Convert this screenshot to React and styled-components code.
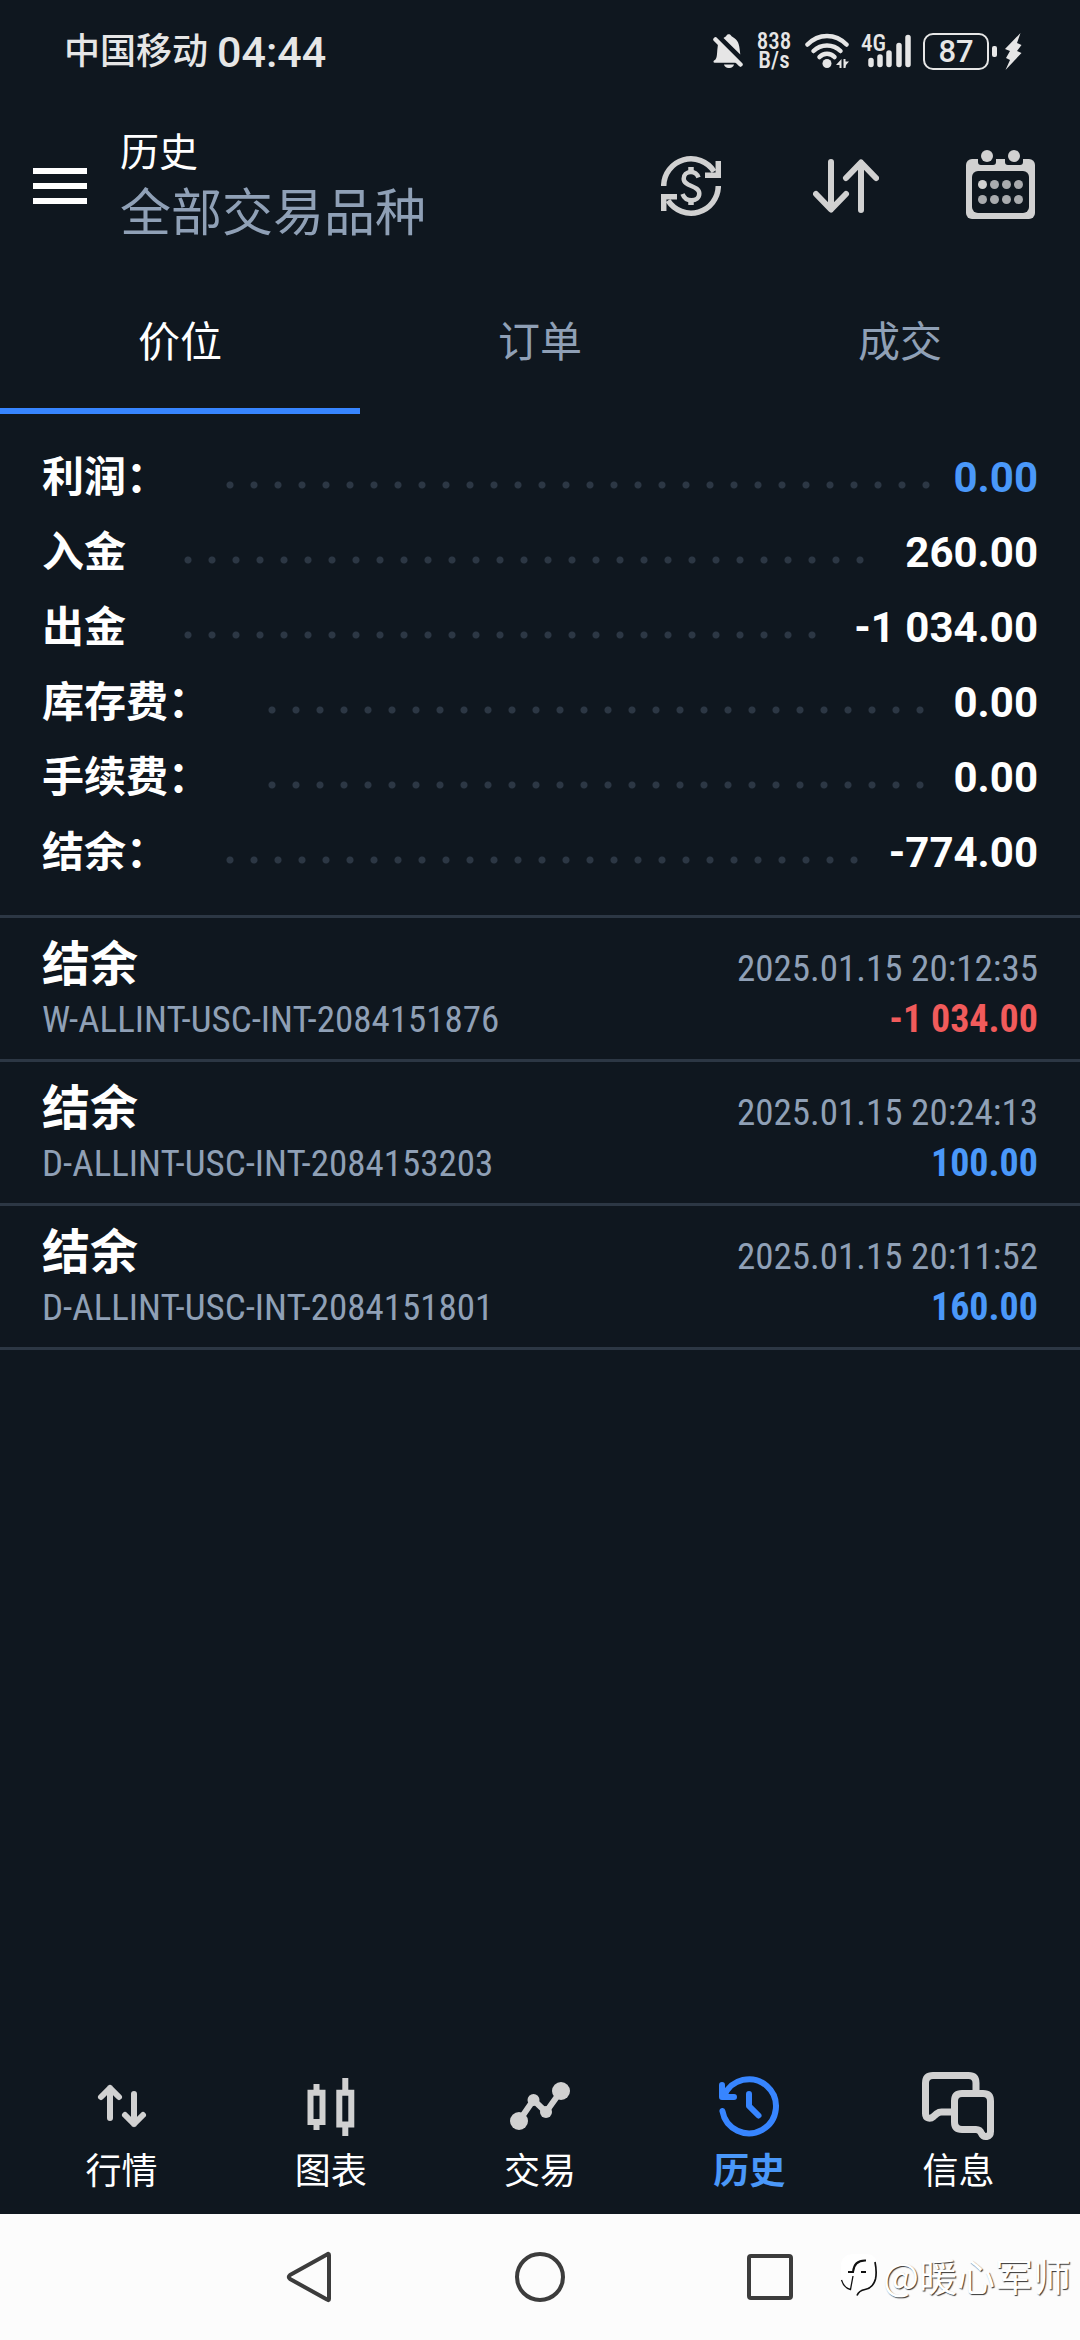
import React from "react";
import styled, { createGlobalStyle } from "styled-components";

const GlobalStyle = createGlobalStyle`
  * {
    box-sizing: border-box;
  }
  body {
    margin: 0;
    background-color: #0f171f;
    color: #ffffff;
    font-family: Roboto, "Noto Sans CJK SC", sans-serif;
  }
  button {
    margin: 0;
    padding: 0;
    border: none;
    background: none;
    color: inherit;
    font-family: inherit;
    cursor: pointer;
  }
  svg {
    display: block;
    flex: none;
  }
`;

const Page = styled.div`
  min-height: 100vh;
  display: flex;
  flex-direction: column;
`;

/* status bar */

const StatusBar = styled.div`
  height: 102px;
  padding: 0 58px 0 64px;
  display: flex;
  justify-content: space-between;
  align-items: center;
  color: #e6e6e6;
`;

const StatusGroup = styled.div`
  display: flex;
  align-items: center;
  gap: ${(props) => props.$gap}px;
`;

const Carrier = styled.span`
  padding-top: 2px;
  font-size: 36px;
  font-weight: 500;
  line-height: 48px;
`;

const Clock = styled.span`
  padding-top: 2px;
  font-size: 43px;
  font-weight: 500;
  line-height: 48px;
`;

const NetSpeed = styled.span`
  width: 38px;
  font-family: "Roboto Condensed", Roboto, sans-serif;
  font-size: 23px;
  font-weight: 500;
  line-height: 19px;
  text-align: center;
  white-space: pre-line;
`;

const Battery = styled.span`
  display: flex;
  align-items: center;
  gap: 3px;

  &::after {
    content: "";
    width: 5px;
    height: 11px;
    border-radius: 2px;
    background-color: #e6e6e6;
  }
`;

const BatteryLevel = styled.span`
  width: 66px;
  height: 37px;
  border: 2px solid #e6e6e6;
  border-radius: 10px;
  font-size: 31px;
  font-weight: 500;
  line-height: 34px;
  text-align: center;
`;

/* header */

const Header = styled.header`
  height: 168px;
  padding: 0 45px 0 33px;
  display: flex;
  align-items: center;
`;

const MenuButton = styled.button`
  width: 54px;
  display: flex;
  flex-direction: column;
  gap: 9px;
`;

const MenuLine = styled.span`
  height: 6px;
  background-color: #ffffff;
`;

const Titles = styled.div`
  flex: 1;
  margin-left: 33px;
  padding-top: 2px;
`;

const Title = styled.h1`
  margin: 0;
  font-size: 39px;
  font-weight: 400;
  line-height: 54px;
`;

const Subtitle = styled.p`
  margin: 0;
  color: #8fa0b6;
  font-size: 51px;
  line-height: 68px;
`;

const Actions = styled.div`
  display: flex;
  align-items: center;
  gap: 86px;
`;

const ActionButton = styled.button`
  width: 69px;
  display: flex;
  justify-content: center;
`;

/* tabs */

const Tabs = styled.nav`
  display: flex;
`;

const Tab = styled.button`
  flex: 1;
  height: 144px;
  padding-top: 8px;
  border-bottom: 6px solid ${(props) => (props.$active ? "#3785ff" : "transparent")};
  color: ${(props) => (props.$active ? "#ffffff" : "#8fa0b6")};
  font-size: 42px;
  line-height: 60px;
`;

/* totals */

const Summary = styled.dl`
  margin: 0;
  padding: 26px 42px 25px;
`;

const SummaryRow = styled.div`
  height: 75px;
  display: flex;
  align-items: center;
  font-size: 42px;
  font-weight: 700;
`;

const SummaryLabel = styled.dt`
  line-height: 60px;
`;

const Leader = styled.div`
  flex: 1;
  margin: 14px 14px 0 50px;

  &::before {
    content: "";
    display: block;
    width: round(down, 100%, 24px);
    height: 8px;
    background: radial-gradient(circle, #2c3744 3px, transparent 4px) 0 0 / 24px 8px repeat-x;
  }
`;

const SummaryValue = styled.dd`
  margin: 0;
  color: ${(props) => (props.$blue ? "#4a98f9" : "#ffffff")};
  line-height: 60px;
`;

/* operations */

const Deals = styled.ul`
  flex: 1;
  margin: 0;
  padding: 0;
  border-top: 3px solid #2c3744;
  list-style: none;
`;

const Deal = styled.li`
  height: 144px;
  padding: 13px 42px 0;
  border-bottom: 3px solid #2c3744;
  font-family: "Roboto Condensed", Roboto, "Noto Sans CJK SC", sans-serif;
`;

const DealLine = styled.div`
  height: ${(props) => props.$height}px;
  display: flex;
  justify-content: space-between;
  align-items: baseline;
`;

const DealTitle = styled.span`
  font-family: "Noto Sans CJK SC", sans-serif;
  font-size: 48px;
  font-weight: 700;
  line-height: 58px;
`;

const DealMeta = styled.span`
  color: #8fa0b6;
  font-size: 37px;
  line-height: 50px;
`;

const DealAmount = styled.span`
  color: ${(props) => (props.$negative ? "#f15b5b" : "#4a98f9")};
  font-size: 38px;
  font-weight: 700;
  line-height: 50px;
`;

/* bottom bars */

const BottomNav = styled.nav`
  height: 144px;
  padding: 0 17px;
  display: flex;
`;

const NavItem = styled.a`
  flex: 1;
  display: flex;
  flex-direction: column;
  align-items: center;
  gap: 4px;
  color: ${(props) => (props.$active ? "#4a98f9" : "#ffffff")};
  font-size: 36px;
  font-weight: ${(props) => (props.$active ? 700 : 400)};
  line-height: 52px;
  text-decoration: none;
`;

const SystemBar = styled.footer`
  position: relative;
  height: 126px;
  display: flex;
  justify-content: center;
  align-items: center;
  background-color: #fcfcfc;
`;

const SystemButton = styled.button`
  width: 230px;
  display: flex;
  justify-content: center;
`;

const Watermark = styled.div`
  position: absolute;
  right: 9px;
  top: 36px;
  display: flex;
  align-items: center;
  gap: 5px;
  color: #ffffff;
  font-family: "Noto Sans CJK SC", sans-serif;
  font-size: 38px;
  line-height: 50px;
  text-shadow: 1px 1px 1px #333333;
`;

const BellOffIcon = () => (
  <svg width="30" height="34" viewBox="0 0 30 34" fill="#e6e6e6">
    <path d="M10.500 4 C12 3 13 2.500 13.500 1.500 C14.500 -0.200 17 -0.200 18 1.500 C18.500 2.700 20 3 21.500 4.200 C26 7.500 26.500 12 27.300 20.500 Z" />
    <path d="M5 10 L25 28.800 H2.500 C0 28.800 -0.200 27 2 26 C4 24.500 4 20 4.300 16 Z" />
    <path d="M2.500 5.500 L27.500 30.500" stroke="#e6e6e6" strokeWidth="4.500" strokeLinecap="round" />
    <path d="M11 30.500 H21 C20 35.200 12 35.200 11 30.500 Z" />
  </svg>
);

const WifiIcon = () => (
  <svg width="44" height="36" viewBox="0 0 44 36" fill="none" stroke="#e6e6e6" strokeWidth="4.500" strokeLinecap="round">
    <path d="M2.500 11.500 C13.500 0 30.500 0 41.500 11.500" />
    <path d="M8.500 18 C16 10.500 28 10.500 35.500 18" />
    <path d="M14.500 24 C18.500 19.700 25.500 19.700 29.500 24" />
    <circle cx="22" cy="30.500" r="4.500" fill="#e6e6e6" stroke="none" />
    <path d="M36.500 26 V35 H34.500 V32 H31 Z M38.500 26 V35 H40.500 L41 32 L44 28.500 H40.500 V26 Z" fill="#e6e6e6" stroke="none" />
  </svg>
);

const NetworkLabel = styled.text`
  fill: #e6e6e6;
  stroke: none;
  font-family: "Roboto Condensed", Roboto, sans-serif;
  font-size: 23px;
  font-weight: 500;
`;

const SignalIcon = () => (
  <svg width="50" height="36" viewBox="0 0 50 36" stroke="#e6e6e6" strokeWidth="5.500" strokeLinecap="round">
    <NetworkLabel x="0" y="18">4G</NetworkLabel>
    <path d="M10 27.500 V31.500 M19 24 V31.500 M28 20 V31.500 M38 12.500 V31.500 M47 4.500 V31.500" />
  </svg>
);

const BoltIcon = () => (
  <svg width="17" height="37" viewBox="0 0 17 37" fill="#e6e6e6">
    <path d="M15.500 0 L0 16 L5 18 L1 25 L5 27 L0.500 37 L16.500 20 L12 18 L16.500 12 L12 10 Z" />
  </svg>
);

const CurrencyIcon = () => (
  <svg width="60" height="60" viewBox="0 0 60 60" fill="none" stroke="#d1d1d1" strokeWidth="5.500">
    <path d="M2.700 30 A27.300 27.300 0 0 1 53 15.500" />
    <path d="M57.300 30 A27.300 27.300 0 0 1 7 44.500" />
    <path d="M57.300 5 V19.200 H44" />
    <path d="M2.700 55 V40.800 H16" />
    <path d="M37.500 21.500 C36 17.500 33.500 16 30 16 C25.500 16 22.700 19 22.700 22.700 C22.700 31 38.300 29 38.300 37.500 C38.300 41.800 35 44.300 30.500 44.300 C26 44.300 23 42 21.500 38" strokeWidth="4.500" />
    <path d="M30 11 V17 M30 43 V49" />
  </svg>
);

const SortIcon = () => (
  <svg width="66" height="54" viewBox="0 0 66 54" fill="none" stroke="#d1d1d1" strokeWidth="6" strokeLinecap="round" strokeLinejoin="round">
    <path d="M18 3 V50 M3 35 L18 50.500 L33 35" />
    <path d="M48 51 V4 M33 19 L48 3.500 L63 19" />
  </svg>
);

const CalendarIcon = () => (
  <svg width="69" height="72" viewBox="0 0 69 72">
    <rect x="0" y="9" width="69" height="60" rx="6" fill="#d1d1d1" />
    <rect x="6" y="21" width="57" height="42" rx="6" fill="#0f171f" />
    <path d="M12 8 H30 V12 Q30 15 27 15 H15 Q12 15 12 12 Z M39 8 H57 V12 Q57 15 54 15 H42 Q39 15 39 12 Z" fill="#0f171f" />
    <circle cx="21" cy="6" r="6" fill="#d1d1d1" />
    <circle cx="48" cy="6" r="6" fill="#d1d1d1" />
    {[34.5, 49.5].map((cy) =>
      [16.5, 28.5, 40.5, 52.5].map((cx) => (
        <circle key={`${cx}-${cy}`} cx={cx} cy={cy} r="4.500" fill={cx < 20 && cy < 40 ? "#d1d1d1" : "#a9abae"} />
      ))
    )}
  </svg>
);

const NavSvg = ({ children, color = "#d1d1d1", strokeWidth = 6 }) => (
  <svg width="72" height="72" viewBox="0 0 72 72" fill="none" stroke={color} strokeWidth={strokeWidth} strokeLinecap="round" strokeLinejoin="round">
    {children}
  </svg>
);

const QuotesIcon = () => (
  <NavSvg>
    <path d="M24 18 V48 M15 27 L24 18 L33 27" />
    <path d="M48 24 V54 M39 45 L48 54 L57 45" />
  </NavSvg>
);

const ChartsIcon = () => (
  <NavSvg>
    <path d="M21.500 14 V20 M21.500 54 V60 M50.300 8 V20 M50.300 57 V66" strokeLinecap="butt" />
    <path d="M15.500 22.700 H27.500 V52 H15.500 Z M44.300 22.700 H56.300 V54.500 H44.300 Z" strokeLinejoin="miter" />
  </NavSvg>
);

const TradeIcon = () => (
  <NavSvg>
    <path d="M15 51 L29.500 30 L42 42 L57 21" />
    <g fill="#d1d1d1" stroke="none">
      <circle cx="15" cy="51" r="9" />
      <circle cx="29.500" cy="30" r="6" />
      <circle cx="42" cy="42" r="6" />
      <circle cx="57" cy="21" r="9" />
    </g>
  </NavSvg>
);

const HistoryIcon = () => (
  <NavSvg color="#3785ff">
    <path d="M9.400 41 A27 27 0 1 0 11 26" />
    <path d="M9 15 V27 H21" />
    <path d="M36 24 V36 L45.500 45.500" />
  </NavSvg>
);

const MessagesIcon = () => (
  <NavSvg strokeWidth={7}>
    <path d="M54 22 V13 Q54 5.500 46.500 5.500 H11 Q3.500 5.500 3.500 13 V43.500 C3.500 48.500 8 49.500 11.500 46.500 L14.500 43.800 Q17 42 19.500 42 H29" strokeLinecap="butt" />
    <path d="M40 23.500 H61 Q68.500 23.500 68.500 31 V61.500 C68.500 67.500 61.500 68 59.500 63.500 Q58 59.500 54 59.500 H40 Q32.500 59.500 32.500 52 V31 Q32.500 23.500 40 23.500 Z" />
  </NavSvg>
);

const WatermarkLogo = () => (
  <svg width="38" height="46" viewBox="0 0 38 46">
    <path d="M14 2 H26 Q37 2 37 14 V24 Q37 38 24 38 Q21 43 16 43 Q18 40 17 38 Q2 37 1 26 V14 Q1 2 14 2 Z" fill="#ffffff" />
    <path d="M35 10 Q37 20 35.500 27 Q33 36 25 37.500 Q19 38.500 17 43.500" fill="none" stroke="#111111" strokeWidth="1.700" />
    <path d="M1.500 28 Q4 36 10.500 37.500 L13 24" fill="none" stroke="#111111" strokeWidth="1.300" />
    <path d="M8 20 H13 Q14 8 26 8.500 M21 20 H26" fill="none" stroke="#111111" strokeWidth="2" />
  </svg>
);

const summary = [
  { label: "利润：", value: "0.00", blue: true },
  { label: "入金", value: "260.00" },
  { label: "出金", value: "-1 034.00" },
  { label: "库存费：", value: "0.00" },
  { label: "手续费：", value: "0.00" },
  { label: "结余：", value: "-774.00" },
];

const deals = [
  { id: "W-ALLINT-USC-INT-2084151876", time: "2025.01.15 20:12:35", amount: "-1 034.00", negative: true },
  { id: "D-ALLINT-USC-INT-2084153203", time: "2025.01.15 20:24:13", amount: "100.00" },
  { id: "D-ALLINT-USC-INT-2084151801", time: "2025.01.15 20:11:52", amount: "160.00" },
];

const navItems = [
  { label: "行情", Icon: QuotesIcon },
  { label: "图表", Icon: ChartsIcon },
  { label: "交易", Icon: TradeIcon },
  { label: "历史", Icon: HistoryIcon, active: true },
  { label: "信息", Icon: MessagesIcon },
];

const App = () => {
  return (
    <Page lang="zh-CN">
      <GlobalStyle />
      <StatusBar>
        <StatusGroup $gap={9}>
          <Carrier>中国移动</Carrier>
          <Clock>04:44</Clock>
        </StatusGroup>
        <StatusGroup $gap={12}>
          <BellOffIcon />
          <NetSpeed>{"838\nB/s"}</NetSpeed>
          <WifiIcon />
          <SignalIcon />
          <StatusGroup $gap={8}>
            <Battery>
              <BatteryLevel>87</BatteryLevel>
            </Battery>
            <BoltIcon />
          </StatusGroup>
        </StatusGroup>
      </StatusBar>
      <Header>
        <MenuButton aria-label="菜单">
          <MenuLine />
          <MenuLine />
          <MenuLine />
        </MenuButton>
        <Titles>
          <Title>历史</Title>
          <Subtitle>全部交易品种</Subtitle>
        </Titles>
        <Actions>
          <ActionButton aria-label="货币">
            <CurrencyIcon />
          </ActionButton>
          <ActionButton aria-label="排序">
            <SortIcon />
          </ActionButton>
          <ActionButton aria-label="日期">
            <CalendarIcon />
          </ActionButton>
        </Actions>
      </Header>
      <Tabs>
        <Tab $active>价位</Tab>
        <Tab>订单</Tab>
        <Tab>成交</Tab>
      </Tabs>
      <Summary>
        {summary.map((row) => (
          <SummaryRow key={row.label}>
            <SummaryLabel>{row.label}</SummaryLabel>
            <Leader />
            <SummaryValue $blue={row.blue}>{row.value}</SummaryValue>
          </SummaryRow>
        ))}
      </Summary>
      <Deals>
        {deals.map((deal) => (
          <Deal key={deal.id}>
            <DealLine $height={63}>
              <DealTitle>结余</DealTitle>
              <DealMeta>{deal.time}</DealMeta>
            </DealLine>
            <DealLine $height={50}>
              <DealMeta>{deal.id}</DealMeta>
              <DealAmount $negative={deal.negative}>{deal.amount}</DealAmount>
            </DealLine>
          </Deal>
        ))}
      </Deals>
      <BottomNav>
        {navItems.map(({ label, Icon, active }) => (
          <NavItem key={label} href="#" $active={active}>
            <Icon />
            {label}
          </NavItem>
        ))}
      </BottomNav>
      <SystemBar>
        <SystemButton aria-label="返回">
          <svg width="50" height="52" viewBox="0 0 50 52" fill="none" stroke="#3c3c3c" strokeWidth="4" strokeLinejoin="round">
            <path d="M44 4 V48 Q44 50 42 48.500 L5 28 Q2.500 26 5 24 L42 3.500 Q44 2 44 4 Z" />
          </svg>
        </SystemButton>
        <SystemButton aria-label="主页">
          <svg width="52" height="52" viewBox="0 0 52 52" fill="none" stroke="#3c3c3c" strokeWidth="4">
            <circle cx="26" cy="26" r="23" />
          </svg>
        </SystemButton>
        <SystemButton aria-label="最近">
          <svg width="46" height="46" viewBox="0 0 46 46" fill="none" stroke="#3c3c3c" strokeWidth="4">
            <rect x="2" y="2" width="42" height="42" rx="2" />
          </svg>
        </SystemButton>
        <Watermark>
          <WatermarkLogo />
          <span>@暖心军师</span>
        </Watermark>
      </SystemBar>
    </Page>
  );
};

export default App;
